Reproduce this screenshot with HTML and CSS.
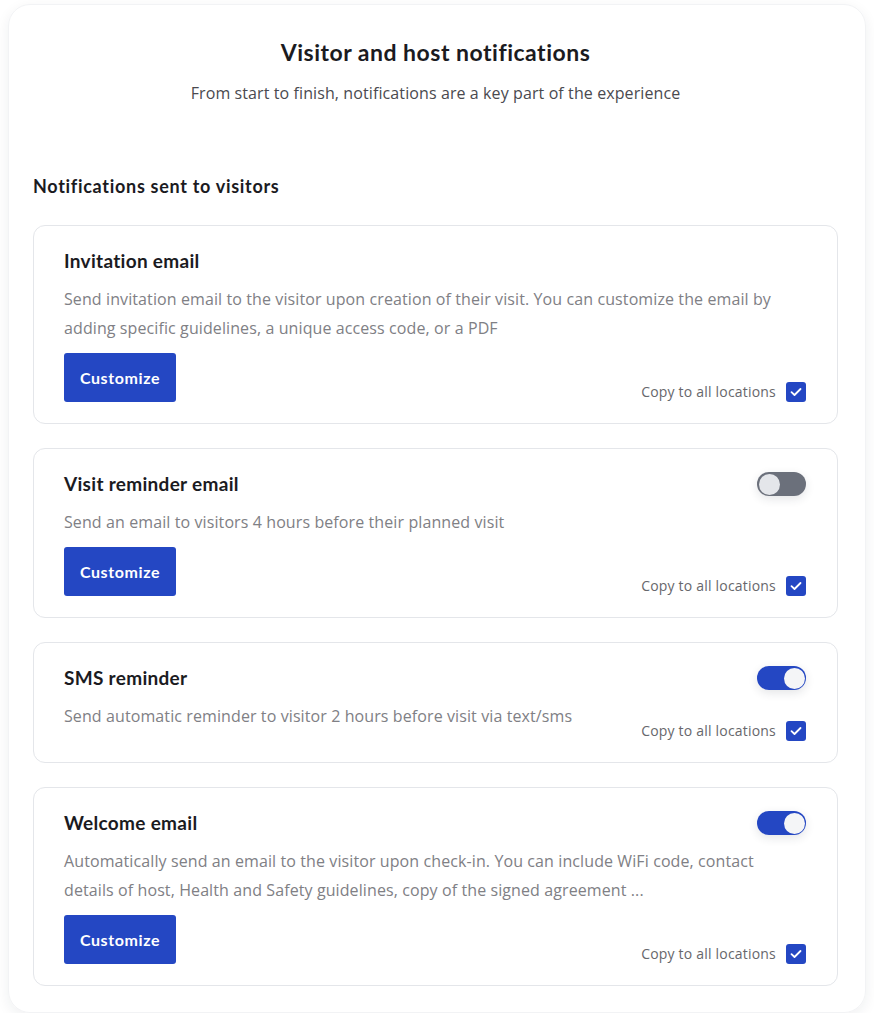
FILE: index.html
```html
<!DOCTYPE html>
<html lang="en">
<head>
    <meta charset="UTF-8">
    <meta name="viewport" content="width=device-width, initial-scale=1.0">
    <title>Visitor and host notifications</title>
    <link rel="stylesheet" href="styles.css">
</head>
<body>
    <div class="panel">
        <h1 class="panel-title">Visitor and host notifications</h1>
        <p class="panel-subtitle">From start to finish, notifications are a key part of the experience</p>

        <h2 class="section-title">Notifications sent to visitors</h2>

        <div class="card-list">
            <div class="card">
                <div class="card-head">
                    <h3 class="card-title">Invitation email</h3>
                </div>
                <p class="card-desc">Send invitation email to the visitor upon creation of their visit. You can customize the email by adding specific guidelines, a unique access code, or a PDF</p>
                <div class="card-foot">
                    <button class="btn">Customize</button>
                    <label class="copy">Copy to all locations <span class="check"><svg width="12" height="10" viewBox="0 0 12 10"><path d="M1.5 5.2 4.5 8 10.5 2" fill="none" stroke="#fff" stroke-width="1.8" stroke-linecap="round" stroke-linejoin="round"/></svg></span></label>
                </div>
            </div>

            <div class="card">
                <div class="card-head">
                    <h3 class="card-title">Visit reminder email</h3>
                    <span class="toggle"><span class="knob"></span></span>
                </div>
                <p class="card-desc">Send an email to visitors 4 hours before their planned visit</p>
                <div class="card-foot">
                    <button class="btn">Customize</button>
                    <label class="copy">Copy to all locations <span class="check"><svg width="12" height="10" viewBox="0 0 12 10"><path d="M1.5 5.2 4.5 8 10.5 2" fill="none" stroke="#fff" stroke-width="1.8" stroke-linecap="round" stroke-linejoin="round"/></svg></span></label>
                </div>
            </div>

            <div class="card">
                <div class="card-head">
                    <h3 class="card-title">SMS reminder</h3>
                    <span class="toggle on"><span class="knob"></span></span>
                </div>
                <p class="card-desc">Send automatic reminder to visitor 2 hours before visit via text/sms</p>
                <div class="card-foot card-foot-tight">
                    <label class="copy">Copy to all locations <span class="check"><svg width="12" height="10" viewBox="0 0 12 10"><path d="M1.5 5.2 4.5 8 10.5 2" fill="none" stroke="#fff" stroke-width="1.8" stroke-linecap="round" stroke-linejoin="round"/></svg></span></label>
                </div>
            </div>

            <div class="card">
                <div class="card-head">
                    <h3 class="card-title">Welcome email</h3>
                    <span class="toggle on"><span class="knob"></span></span>
                </div>
                <p class="card-desc">Automatically send an email to the visitor upon check-in. You can include WiFi code, contact details of host, Health and Safety guidelines, copy of the signed agreement ...</p>
                <div class="card-foot">
                    <button class="btn">Customize</button>
                    <label class="copy">Copy to all locations <span class="check"><svg width="12" height="10" viewBox="0 0 12 10"><path d="M1.5 5.2 4.5 8 10.5 2" fill="none" stroke="#fff" stroke-width="1.8" stroke-linecap="round" stroke-linejoin="round"/></svg></span></label>
                </div>
            </div>
        </div>
    </div>
</body>
</html>
```

FILE: styles.css
```css
body {
    margin: 0;
    background: #fff;
    font-family: "Open Sans", "Noto Sans", sans-serif;
    color: #1b1b1f;
}

.panel {
    margin: 4px 8px 0 8px;
    width: 858px;
    box-sizing: border-box;
    padding: 33px 27px 26px 24px;
    border-radius: 22px;
    border: 1px solid #f2f3f5;
    box-shadow: 0 4px 14px rgba(30, 40, 60, 0.07);
}

.panel-title,
.section-title,
.card-title,
.btn {
    font-family: Lato, "Noto Sans", sans-serif;
    font-weight: 700;
}

.panel-title {
    margin: 0;
    text-align: center;
    font-size: 23px;
    line-height: 28px;
    letter-spacing: 0.5px;
}

.panel-subtitle {
    margin: 17px 0 0 0;
    text-align: center;
    font-size: 16px;
    line-height: 20px;
    letter-spacing: 0.1px;
    color: #4a4a4f;
}

.section-title {
    margin: 72px 0 0 0;
    font-size: 18px;
    line-height: 22px;
    letter-spacing: 0.7px;
}

.card-list {
    margin-top: 28px;
    display: flex;
    flex-direction: column;
    gap: 24px;
}

.card {
    border: 1px solid #e4e6ea;
    border-radius: 12px;
    padding: 23px 31px 21px 30px;
}

.card-head {
    display: flex;
    align-items: center;
    justify-content: space-between;
    height: 24px;
}

.card-title {
    margin: 0;
    font-size: 19px;
    line-height: 24px;
    letter-spacing: 0.3px;
}

.card-desc {
    margin: 12px 0 0 0;
    font-size: 16px;
    line-height: 29px;
    letter-spacing: 0.1px;
    color: #808085;
}

.card-foot {
    margin-top: 10px;
    display: flex;
    align-items: flex-end;
    justify-content: space-between;
}

.card-foot-tight {
    margin-top: -10px;
    justify-content: flex-end;
}

.btn {
    width: 112px;
    height: 49px;
    border: none;
    border-radius: 3px;
    background: #2447c3;
    color: #fff;
    font-size: 16px;
    letter-spacing: 0.6px;
    cursor: pointer;
}

.copy {
    display: flex;
    align-items: center;
    gap: 10px;
    font-size: 14px;
    line-height: 20px;
    letter-spacing: 0.2px;
    color: #67676c;
}

.check {
    width: 20px;
    height: 20px;
    border-radius: 3px;
    background: #2447c3;
    display: flex;
    align-items: center;
    justify-content: center;
}

.toggle {
    position: relative;
    width: 49px;
    height: 24px;
    border-radius: 12px;
    background: #6b707b;
    box-shadow: 0 3px 10px rgba(30, 40, 60, 0.12);
}

.toggle .knob {
    position: absolute;
    top: 1.5px;
    left: 1.5px;
    width: 21px;
    height: 21px;
    border-radius: 50%;
    background: #e4e6ea;
}

.toggle.on {
    background: #2447c3;
}

.toggle.on .knob {
    left: 26.5px;
    background: #f4f5f7;
}
```
